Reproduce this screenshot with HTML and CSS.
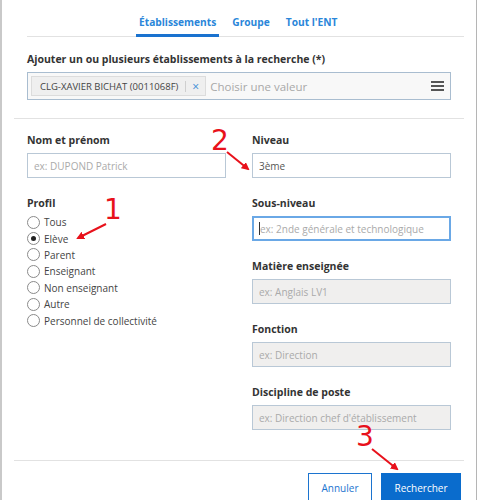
FILE: index.html
```html
<!DOCTYPE html>
<html lang="fr">
<head>
    <meta charset="UTF-8">
    <meta name="viewport" content="width=device-width, initial-scale=1.0">
    <title>Recherche avancée</title>
    <link rel="stylesheet" href="styles.css">
</head>
<body>
    <div class="modal">
        <div class="tabs">
            <a class="tab active">Établissements</a>
            <a class="tab">Groupe</a>
            <a class="tab">Tout l'ENT</a>
        </div>

        <div class="section">
            <label class="label">Ajouter un ou plusieurs établissements à la recherche (*)</label>
            <div class="multiselect">
                <span class="chip">CLG-XAVIER BICHAT (0011068F)<span class="chip-sep"></span><span class="chip-x">×</span></span>
                <span class="ms-placeholder">Choisir une valeur</span>
                <span class="burger"><i></i><i></i><i></i></span>
            </div>
        </div>

        <div class="form">
            <div class="col">
                <div class="field">
                    <label class="label">Nom et prénom</label>
                    <input class="input" type="text" placeholder="ex: DUPOND Patrick">
                </div>
                <div class="field">
                    <label class="label">Profil</label>
                    <div class="radios">
                        <label class="radio"><span class="dot"></span>Tous</label>
                        <label class="radio"><span class="dot checked"></span>Elève</label>
                        <label class="radio"><span class="dot"></span>Parent</label>
                        <label class="radio"><span class="dot"></span>Enseignant</label>
                        <label class="radio"><span class="dot"></span>Non enseignant</label>
                        <label class="radio"><span class="dot"></span>Autre</label>
                        <label class="radio"><span class="dot"></span>Personnel de collectivité</label>
                    </div>
                </div>
            </div>
            <div class="col">
                <div class="field">
                    <label class="label">Niveau</label>
                    <input class="input" type="text" value="3ème">
                </div>
                <div class="field">
                    <label class="label">Sous-niveau</label>
                    <div class="input focus"><span class="caret"></span><span class="ph">ex: 2nde générale et technologique</span></div>
                </div>
                <div class="field">
                    <label class="label">Matière enseignée</label>
                    <input class="input" type="text" placeholder="ex: Anglais LV1" disabled>
                </div>
                <div class="field">
                    <label class="label">Fonction</label>
                    <input class="input" type="text" placeholder="ex: Direction" disabled>
                </div>
                <div class="field">
                    <label class="label">Discipline de poste</label>
                    <input class="input" type="text" placeholder="ex: Direction chef d'établissement" disabled>
                </div>
            </div>
        </div>

        <div class="footer">
            <button class="btn btn-outline">Annuler</button>
            <button class="btn btn-primary">Rechercher</button>
        </div>

        <!-- annotations rouges -->
        <svg class="notes" width="478" height="500" viewBox="0 0 478 500">
            <defs>
                <marker id="head" markerWidth="8" markerHeight="8" refX="6" refY="4" orient="auto" markerUnits="userSpaceOnUse">
                    <path d="M0,0 L8,4 L0,8 Z" fill="#e8111b"/>
                </marker>
            </defs>
            <text x="104" y="219" class="num">1</text>
            <line x1="106" y1="224" x2="78" y2="238" stroke="#e8111b" stroke-width="2" marker-end="url(#head)"/>
            <text x="211" y="150" class="num">2</text>
            <line x1="227" y1="152" x2="248" y2="169" stroke="#e8111b" stroke-width="2" marker-end="url(#head)"/>
            <text x="356" y="446" class="num">3</text>
            <line x1="372" y1="449" x2="397" y2="469" stroke="#e8111b" stroke-width="2" marker-end="url(#head)"/>
        </svg>
    </div>
</body>
</html>
```

FILE: styles.css
```css
body {
    margin: 0;
    font-family: "Open Sans", Arial, sans-serif;
    background: #fff;
    color: #333;
}

.modal {
    position: relative;
    width: 477px;
    height: 500px;
    border-left: 2px solid #c9c9c9;
    border-right: 1px solid #b5b5b5;
    overflow: hidden;
    padding: 0 12px;
    box-sizing: border-box;
}

.tabs {
    display: flex;
    gap: 10px;
    margin-left: 13px;
    padding-top: 15px;
    padding-left: 109px;
    border-bottom: 1px solid #e2e2e2;
}

.tab {
    font-size: 10.2px;
    line-height: 14px;
    font-weight: 700;
    color: #2a86d9;
    padding: 0 3px 5px;
    border-bottom: 3px solid transparent;
    margin-bottom: -1px;
}

.tab.active {
    border-bottom-color: #1a72cf;
}

.section {
    padding: 15px 13px 18px;
    border-bottom: 1px solid #e2e2e2;
}

.label {
    display: block;
    font-size: 10.5px;
    line-height: 14px;
    font-weight: 700;
    color: #333;
    margin-bottom: 6px;
}

.multiselect {
    display: flex;
    align-items: center;
    height: 28px;
    border: 1px solid #a9bdd0;
    background: #f8f8f8;
    padding: 0 3px;
    box-sizing: border-box;
}

.chip {
    display: flex;
    align-items: center;
    height: 20px;
    padding: 0 6px 0 8px;
    background: #efefef;
    border: 1px solid #dcdcdc;
    font-size: 9.5px;
    color: #444;
    box-sizing: border-box;
}

.chip-sep {
    width: 1px;
    height: 11px;
    background: #cfcfcf;
    margin: 0 6px 0 7px;
}

.chip-x {
    color: #3b8ad6;
    font-size: 12px;
}

.ms-placeholder {
    flex: 1;
    font-size: 11.5px;
    color: #a8a8a8;
    margin-left: 4px;
}

.burger {
    display: flex;
    flex-direction: column;
    gap: 2px;
    margin-right: 3px;
}

.burger i {
    display: block;
    width: 13px;
    height: 2px;
    background: #555;
}

.form {
    display: grid;
    grid-template-columns: 199px 199px;
    column-gap: 26px;
    align-content: start;
    padding: 14px 13px 0;
    height: 342px;
    border-bottom: 1px solid #e2e2e2;
    box-sizing: border-box;
}

.field {
    margin-bottom: 18px;
}

.input {
    display: flex;
    align-items: center;
    width: 100%;
    height: 25px;
    box-sizing: border-box;
    border: 1px solid #b9c8d6;
    background: #fff;
    padding: 0 6px;
    font-family: "Open Sans", Arial, sans-serif;
    font-size: 10px;
    color: #555;
    outline: none;
}

.input::placeholder {
    color: #aaa;
}

.input:disabled {
    background: #f0efee;
}

.input.focus {
    border: 2px solid #6aa8e6;
    padding: 0 5px;
}

.caret {
    width: 1px;
    height: 13px;
    background: #333;
}

.ph {
    color: #aaa;
}

.radios {
    display: flex;
    flex-direction: column;
    margin-top: -2px;
}

.radio {
    display: flex;
    align-items: center;
    height: 16.4px;
    font-size: 10px;
    color: #444;
}

.dot {
    width: 11px;
    height: 11px;
    border: 1px solid #8a8a8a;
    border-radius: 50%;
    margin-right: 4px;
    background: #fff;
    position: relative;
}

.dot.checked::after {
    content: "";
    position: absolute;
    left: 3px;
    top: 3px;
    width: 5px;
    height: 5px;
    border-radius: 50%;
    background: #222;
}

.footer {
    display: flex;
    justify-content: flex-end;
    gap: 9px;
    padding: 12px 3px 0 0;
}

.btn {
    height: 30px;
    font-family: "Open Sans", Arial, sans-serif;
    font-size: 10px;
    cursor: pointer;
    box-sizing: border-box;
}

.btn-outline {
    width: 64px;
    background: #fff;
    color: #1c74cf;
    border: 1px solid #1c74cf;
}

.btn-primary {
    width: 80px;
    background: #0a6ccd;
    color: #fff;
    border: 1px solid #0a6ccd;
}

.notes {
    position: absolute;
    left: -2px;
    top: 0;
    pointer-events: none;
}

.num {
    font-family: "DejaVu Sans", sans-serif;
    font-size: 28px;
    fill: #e8111b;
}
```
